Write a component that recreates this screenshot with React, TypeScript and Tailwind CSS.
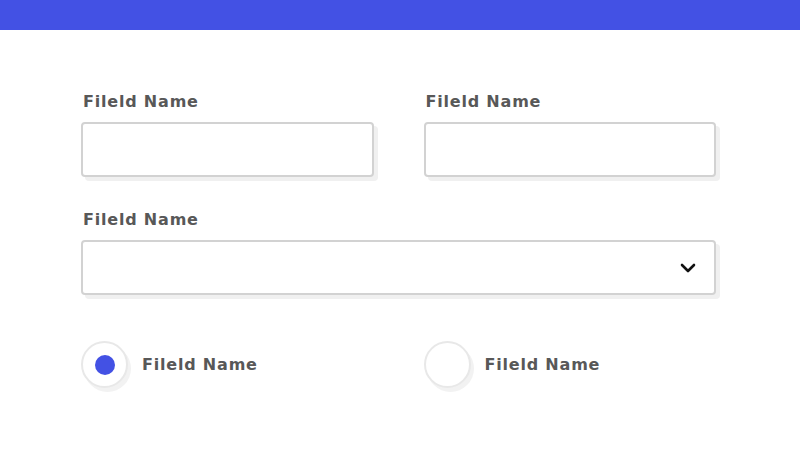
import React from "react";

const font = { fontFamily: '"DejaVu Sans", "Liberation Sans", sans-serif' };

function Label({ children }: { children: React.ReactNode }) {
  return (
    <div className="text-[16px] font-bold leading-[20px] text-[#585858] tracking-[0.8px] pl-[2px]">
      {children}
    </div>
  );
}

function Input() {
  return (
    <div className="h-[55px] rounded-[4px] border-2 border-[#d2d2d2] bg-white shadow-[4px_4px_0_0_#f0f0f0]" />
  );
}

export default function App() {
  return (
    <div className="w-[800px] h-[450px] bg-white overflow-hidden" style={font}>
      <div className="h-[30px] bg-[#4351e4]" />
      <div className="pl-[81px] pr-[84px] pt-[62px]">
        <div className="grid grid-cols-2 gap-x-[50px]">
          <div className="flex flex-col gap-[10px]">
            <Label>Fileld Name</Label>
            <Input />
          </div>
          <div className="flex flex-col gap-[10px]">
            <Label>Fileld Name</Label>
            <Input />
          </div>
        </div>
        <div className="mt-[33px] flex flex-col gap-[10px]">
          <Label>Fileld Name</Label>
          <div className="h-[55px] rounded-[4px] border-2 border-[#d2d2d2] bg-white shadow-[4px_4px_0_0_#f0f0f0] flex items-center justify-end pr-[18px]">
            <svg width="16" height="10" viewBox="0 0 16 10" fill="none">
              <path d="M2 2 L8 8 L14 2" stroke="#111" strokeWidth="2.6" strokeLinecap="round" strokeLinejoin="round" />
            </svg>
          </div>
        </div>
        <div className="mt-[46px] grid grid-cols-2 gap-x-[50px]">
          <div className="flex items-center gap-[12px]">
            <div className="w-[47px] h-[47px] rounded-full border-2 border-[#e8e8e8] bg-white shadow-[3px_4px_0_0_#f2f2f2] flex items-center justify-center">
              <div className="w-[20px] h-[20px] rounded-full bg-[#4351e4]" />
            </div>
            <Label>Fileld Name</Label>
          </div>
          <div className="flex items-center gap-[12px]">
            <div className="w-[47px] h-[47px] rounded-full border-2 border-[#e8e8e8] bg-white shadow-[3px_4px_0_0_#f2f2f2]" />
            <Label>Fileld Name</Label>
          </div>
        </div>
      </div>
    </div>
  );
}
